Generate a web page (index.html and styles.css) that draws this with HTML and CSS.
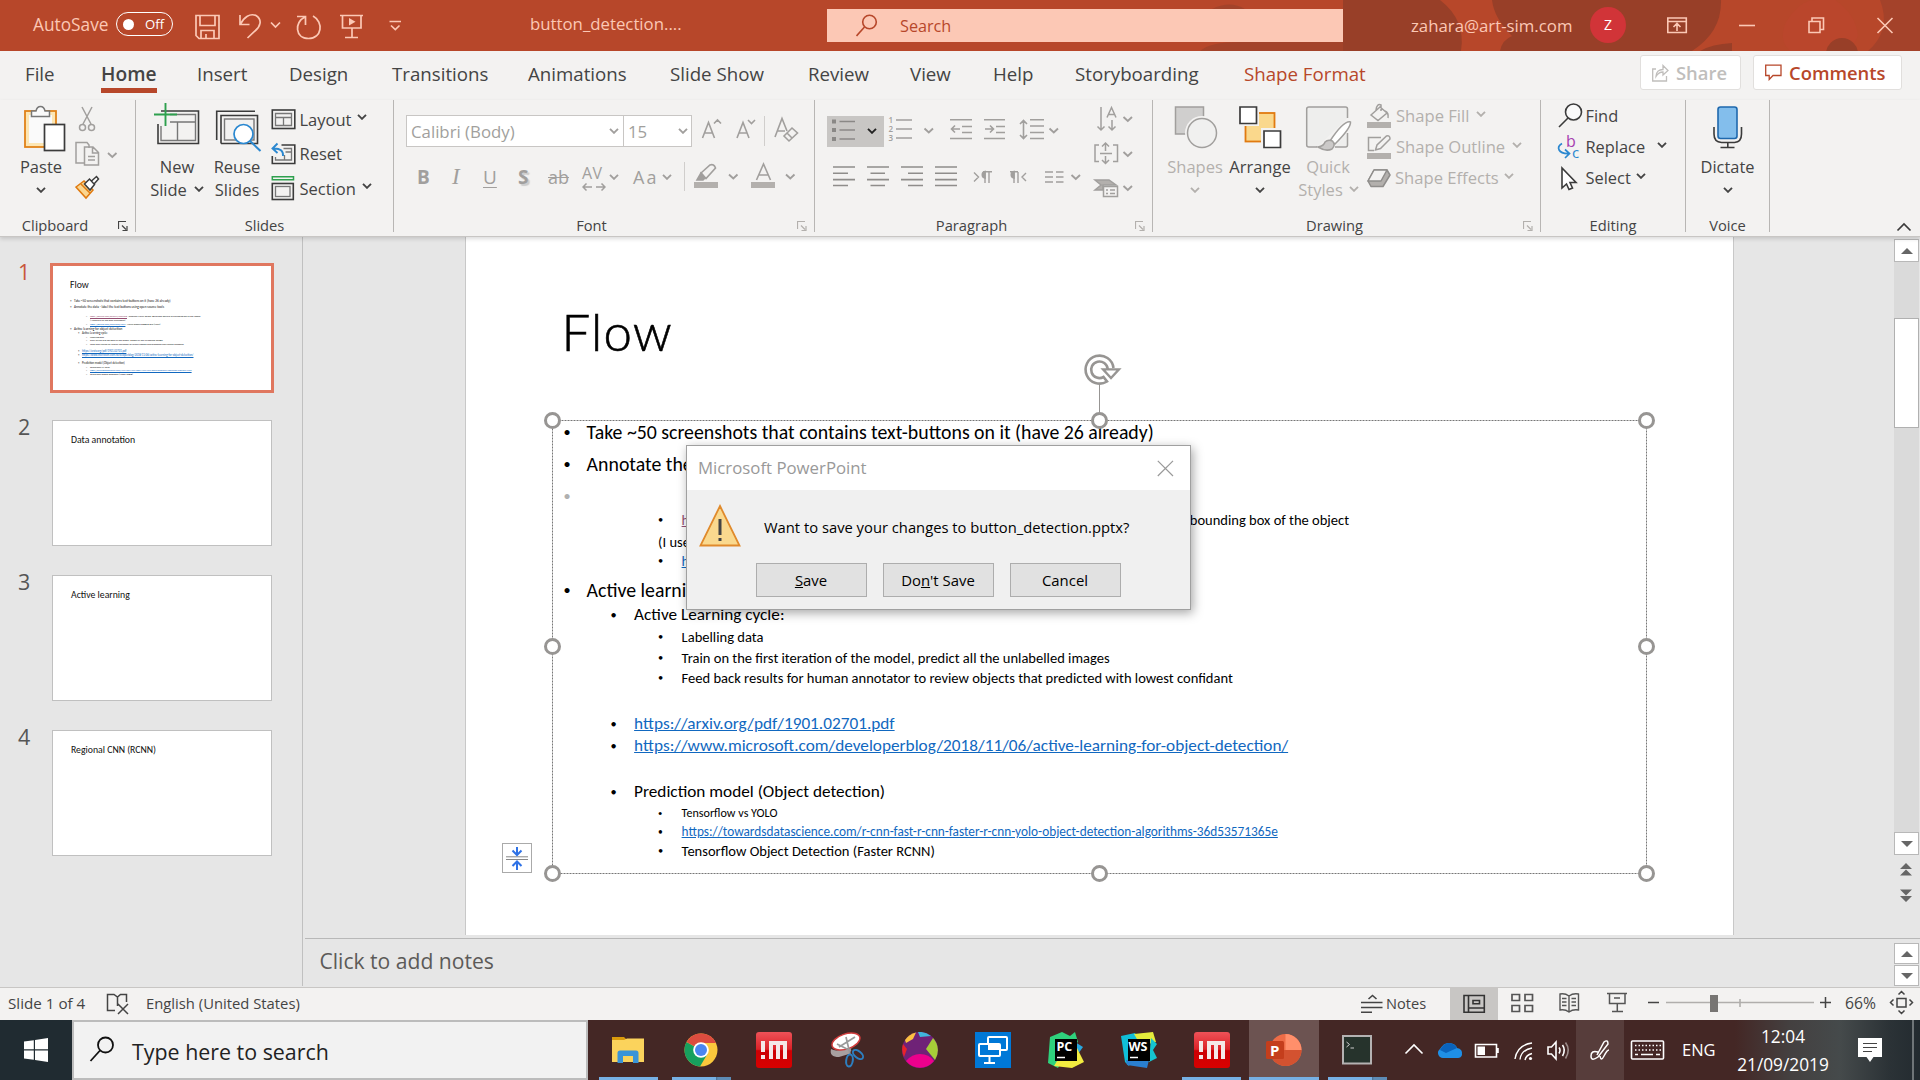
FILE: index.html
```html
<!DOCTYPE html>
<html lang="en">
<head>
<meta charset="utf-8">
<title>button_detection.pptx - PowerPoint</title>
<link rel="stylesheet" href="styles.css">
</head>
<body>
<svg class="defs" width="0" height="0">
  <defs>
    <symbol id="cv" viewBox="0 0 10 6"><path d="M1 .8 5 4.8 9 .8" fill="none" stroke="currentColor" stroke-width="1.9"/></symbol>
    <symbol id="launch" viewBox="0 0 10 11"><path d="M.5 8V.5H8M4 4.500 8 8.500M9 5V9.500H4.500" fill="none" stroke="currentColor" stroke-width="1.200"/></symbol>
    <linearGradient id="red" x1="0" y1="0" x2="0" y2="1"><stop offset="0" stop-color="#ee5258"/><stop offset=".48" stop-color="#dc2228"/><stop offset=".52" stop-color="#cc0004"/><stop offset="1" stop-color="#d80000"/></linearGradient>
    <symbol id="mi" viewBox="0 0 36 36"><rect width="36" height="36" rx="3" fill="url(#red)"/><path d="M5 9H9V20H5zM5 23H9V27H5zM13 9H31V27H27V13H24V27H20V13H17V27H13z" fill="#f4e8e8"/></symbol>
  </defs>
</svg>
<div class="app">
  <header class="titlebar">
    <svg class="swirl" width="920" height="51" viewBox="1000 0 920 51">
      <path d="M1200 51Q1210 42 1240 42H1345V51z" fill="#a3432a"/>
      <path d="M1212 9Q1230 0 1245 9z" fill="#a3432a"/>
      <path d="M1343 0H1440Q1466 20 1461 51H1343z" fill="#983f28"/>
      <path d="M1492 0H1721Q1722 32 1692 51H1500Q1502 40 1512 36Q1494 18 1492 0z" fill="#983f28"/>
      <path d="M1700 51Q1712 44 1732 43V51z" fill="#983f28"/>
      <path d="M1786 22Q1800 0 1815 0H1835Q1856 14 1858 36L1850 51H1790Q1778 40 1786 22z" fill="#ba462c"/>
      <circle cx="1842" cy="54" r="16" fill="#983f28"/>
      <path d="M1880 0H1920V51H1868Q1892 30 1880 0z" fill="#a4422a"/>
    </svg>
    <span class="autosave">AutoSave</span>
    <span class="toggle"><i></i>Off</span>
    <svg class="qat" width="230" height="51" viewBox="180 0 230 51" fill="none" stroke="#fcc8b5" stroke-width="1.700">
      <path d="M196 15.500H219V38.500H199L196 35.500zM200 16V25.500H215V16M201 38V30.500H214V38M206 38V34"/>
      <path d="M240 15V24.500H249.500M240.500 24C244 17 250 13 256 15.500C263 20 260 27 255 31L247.500 38"/>
      <path d="M271 22.500 275.500 27 280 22.500"/>
      <path d="M297 16.500H305.500V25M305 17C294 22 295 38.500 308.500 38.500C322 38.500 324 22 313 16"/>
      <path d="M340 15.500H363M342.500 16V28H361V16M352 28V37.500M345 37.500H358"/><path d="M349 18 355.500 21.700 349 25.500z" fill="#fcc8b5" stroke="none"/>
      <path d="M389.500 21.500H401M391 25.500 395.300 29.500 399.500 25.500"/>
    </svg>
    <span class="docname">button_detection....</span>
    <div class="search"><svg width="24" height="24" viewBox="0 0 24 24" fill="none" stroke="#b7472a" stroke-width="1.600"><circle cx="13.500" cy="8" r="6.800"/><path d="M8.500 13 .5 22"/></svg>Search</div>
    <span class="account">zahara@art-sim.com</span>
    <span class="avatar">Z</span>
    <svg class="winctl" width="250" height="51" viewBox="1650 0 250 51" fill="none" stroke="#fcc8b5" stroke-width="1.600">
      <path d="M1667.800 18H1686.300V32.500H1667.800zM1668 21.500H1686M1677 31V24M1673.500 27 1677 23.500 1680.500 27"/>
      <path d="M1739 25.500H1755"/><path d="M1809 21.500H1820V32.500H1809zM1812 21V18H1823.500V29.500H1820"/>
      <path d="M1877.500 18 1892.500 33M1892.500 18 1877.500 33"/>
    </svg>
  </header>

  <nav class="tabs">
    <a>File</a><a class="active"><b>Home</b></a><a>Insert</a><a>Design</a><a>Transitions</a><a>Animations</a><a>Slide Show</a><a>Review</a><a>View</a><a>Help</a><a>Storyboarding</a><a class="context">Shape Format</a>
    <span class="pill share"><svg width="17" height="18" viewBox="0 0 17 18" fill="none" stroke="#c0bebc" stroke-width="1.300"><path d="M4 5H.7V17H14.500V12M4 12.500C4 8 7 5.500 11 5.500V1.500L16 6.500 11 11V8C8 8 6 9 4 12.500z"/></svg>Share</span>
    <span class="pill comments"><svg width="17" height="17" viewBox="0 0 17 17" fill="none" stroke="#b7472a" stroke-width="1.300"><path d="M.7 1.200H16V11.500H8L4.200 15.500V11.500H.7z"/></svg>Comments</span>
  </nav>

  <section class="ribbon">
    <div class="group clipboard">
      <div class="body">
        <div class="big paste">
          <svg width="60" height="58" viewBox="14 100 60 58"><rect x="25" y="111" width="31" height="36" fill="#fce6b4" stroke="#e08218" stroke-width="1.800"/><rect x="29" y="115" width="23" height="28" fill="#fafafa"/><path d="M31.500 116.500V111H36Q37 106.500 40.500 106.500T45 111H49.500V116.500z" fill="#fafafa" stroke="#777" stroke-width="1.500"/><rect x="44.500" y="124.500" width="20" height="26" fill="#fff" stroke="#3b3b3b" stroke-width="1.700"/></svg>
          <span>Paste</span><svg class="cv"><use href="#cv"/></svg>
        </div>
        <svg class="tools" width="56" height="106" viewBox="72 100 56 106" fill="none" stroke="#a19f9d" stroke-width="1.500"><path d="M82 107 91 124M92 107 83 124"/><circle cx="82.500" cy="127.500" r="3"/><circle cx="91.500" cy="127.500" r="3"/>
          <path d="M84 163H76V142.500H87L89 145V148M84.500 147H93L98.500 152.500V165H84.500zM92.500 147V153H98.500M88 156.500H95M88 160H95"/><path d="M108 153 112.300 157 116.500 153" stroke-width="1.800"/>
          <path d="M76 187 84 181 93 190 86 198z" fill="#fbd690" stroke="#e07a10"/><path d="M81 184 90 193" stroke="#e07a10"/><path d="M84.500 184 89.500 179 94.500 184.500 90 190zM91.500 181 96.500 176.500 98.500 179 94 184" fill="#fff" stroke="#3b3b3b"/></svg>
      </div>
      <div class="label">Clipboard<svg class="launch"><use href="#launch"/></svg></div>
    </div>

    <div class="group slides">
      <div class="body">
        <div class="big new">
          <svg width="56" height="58" viewBox="150 100 56 58" fill="none"><path d="M161 111H198.500V143.500H158V124" stroke="#3b3b3b" stroke-width="1.600"/><path d="M170 114.500H195.500V140.500H161V126M170 122H195M177.500 122V140" stroke="#777" stroke-width="1.400"/><path d="M154 114.500H177M165.500 103V126" stroke="#2ea04e" stroke-width="1.900"/></svg>
          <span>New</span><span class="two">Slide <svg class="cv"><use href="#cv"/></svg></span>
        </div>
        <div class="big reuse">
          <svg width="56" height="58" viewBox="210 100 56 58" fill="none"><path d="M216.700 140V111.200H255M221 143.500V115.500H257.500V143.500H221" stroke="#3b3b3b" stroke-width="1.600"/><rect x="224.500" y="119" width="29.500" height="21" stroke="#777" stroke-width="1.400"/><circle cx="243.500" cy="134" r="9.500" fill="#fff" stroke="#2b88d0" stroke-width="1.700"/><path d="M250 141 260.500 151" stroke="#2b88d0" stroke-width="2"/></svg>
          <span>Reuse</span><span class="two">Slides</span>
        </div>
        <div class="rows">
          <div class="row"><svg width="25" height="26" viewBox="270.500 105 25 26" fill="none"><rect x="271.800" y="109" width="22.500" height="18.500" stroke="#3b3b3b" stroke-width="1.600"/><path d="M275 112.500H291V124.500H275zM275 116.500H291M283 116.500V124.500" stroke="#777" stroke-width="1.300"/></svg>Layout<svg class="cv"><use href="#cv"/></svg></div>
          <div class="row"><svg width="25" height="26" viewBox="270.500 140 25 26" fill="none"><path d="M281 144H294.300V162.500H271.800V155" stroke="#3b3b3b" stroke-width="1.600"/><path d="M283 147.500H291V159H275V156M285 151H291M284 154V159" stroke="#777" stroke-width="1.300"/><path d="M277 142.500 272 147.500 277 152M272.500 147.500C280 147 283 150 282.500 155" stroke="#2b88d0" stroke-width="1.900"/></svg>Reset</div>
          <div class="row"><svg width="25" height="26" viewBox="270.500 175 25 26" fill="none"><path d="M271.800 176.800H293V179.800H271.800z" stroke="#2ea04e" stroke-width="1.500"/><rect x="271.800" y="183.500" width="21" height="16" stroke="#3b3b3b" stroke-width="1.600"/><rect x="275" y="186.500" width="14.500" height="10" stroke="#777" stroke-width="1.300"/></svg>Section<svg class="cv"><use href="#cv"/></svg></div>
        </div>
      </div>
      <div class="label">Slides</div>
    </div>

    <div class="group font">
      <div class="body col">
        <div class="line">
          <div class="combo face">Calibri (Body)<svg class="cv"><use href="#cv"/></svg></div><div class="combo size">15<svg class="cv"><use href="#cv"/></svg></div>
          <svg width="110" height="34" viewBox="692 114 110 34" fill="none" stroke="#a19f9d" stroke-width="1.600"><path d="M702.500 138 708.500 122.500 714.500 138M704.500 133H712.500M714 123.500 717.500 120 721 123.500M737 138 743 122.500 749 138M739 133H747M748 120 751.500 123.500 755 120"/><path d="M764.500 116V146" stroke="#d0cecc" stroke-width="1"/><path d="M775 137 782 118.500 787 131M777 131H785M784 136 792 128 797.500 133 789 141zM787 133 792 138"/></svg>
        </div>
        <div class="line styles">
          <b>B</b><i>I</i><u>U</u><b class="shadow">S</b><s>ab</s>
          <span class="av">AV<svg width="24" height="8" viewBox="0 0 24 8" fill="none" stroke="currentColor" stroke-width="1.500"><path d="M4.500.5 1 4 4.500 7.500M1 4H10M19.500.5 23 4 19.500 7.500M23 4H14"/></svg></span><svg class="cv"><use href="#cv"/></svg>
          <span class="aa">Aa</span><svg class="cv"><use href="#cv"/></svg>
          <svg width="125" height="34" viewBox="681 161 125 34" fill="none" stroke="#a19f9d" stroke-width="1.600"><path d="M684.500 163V192" stroke="#d0cecc" stroke-width="1"/><path d="M694 183H718V189H694zM751 183H775V189H751z" fill="#b3b0ad" stroke="none"/><path d="M697 181 701 174 705 179 703 181z" fill="#a19f9d"/><path d="M701 174 710 166Q714 164.500 715.500 169L706 179.500z"/><path d="M729 175.500 733.300 179.500 737.500 175.500M786 175.500 790.300 179.500 794.500 175.500" stroke-width="1.900"/><path d="M756.500 181 763.500 165 770.500 181M759 176H768"/></svg>
        </div>
      </div>
      <div class="label">Font<svg class="launch off"><use href="#launch"/></svg></div>
    </div>

    <div class="group para">
      <div class="body">
        <div class="col">
          <div class="line">
            <span class="pressed"><svg width="26" height="24" viewBox="830 118 26 24"><path d="M832 118.500H836V122.500H832zM832 127H836V131H832zM832 136H836V140H832z" fill="#8a8886"/><path d="M839.500 120.500H855M839.500 129H855M839.500 138H855" stroke="#8a8886" stroke-width="1.600"/></svg><svg class="cv"><use href="#cv"/></svg></span>
            <svg width="181" height="34" viewBox="885 114 181 34" fill="none" stroke="#a19f9d" stroke-width="1.600"><path d="M896 120H912M896 129H912M896 138H912"/><path d="M924.500 128.500 928.800 132.500 933 128.500M1049.500 128.500 1053.800 132.500 1058 128.500" stroke-width="1.900"/><path d="M950 119.700H972M962 126.500H972M962 132.500H972M950 138.500H972M960 129H951.500M955 125.500 951.500 129 955 132.500M984 119.700H1005M996 126.500H1005M996 132.500H1005M984 138.500H1005M985 129H993.500M990 125.500 993.500 129 990 132.500M1030 119.700H1044M1030 126H1044M1030 132.500H1044M1030 138.500H1044M1023.500 120V139M1020 124 1023.500 120.500 1027 124M1020 135 1023.500 138.500 1027 135"/><g class="digits"><text x="888.500" y="123">1</text><text x="888.500" y="132">2</text><text x="888.500" y="141">3</text></g></svg>
          </div>
          <svg width="255" height="34" viewBox="827 159 255 34" fill="none" stroke="#8f8d8b" stroke-width="1.600"><path d="M833 166H855M833 172.300H848M833 178.600H855M833 184.500H848M867 166H889M870.500 172.300H885M867 178.600H889M870.500 184.500H885M901 166H923M908 172.300H923M901 178.600H923M908 184.500H923M935 166H957M935 172.300H957M935 178.600H957M935 184.500H957"/><path d="M974 171.500 978.500 176 974 180.500M985 182V171M989 182V171M983 170.800H992M1014 182V171M1018 182V171M1010 170.800H1018M1026 172 1022 176 1026 180M1045 171H1053M1045 176H1053M1045 181H1053M1056 171H1063.500M1056 176H1063.500M1056 181H1063.500" stroke="#a19f9d" stroke-width="1.400"/><path d="M985 170.500A3.300 3.300 0 0 0 985 177zM1014 170.500A3.300 3.300 0 0 0 1014 177z" fill="#a19f9d" stroke="#a19f9d"/><path d="M1071.500 174 1075.800 178 1080 174" stroke="#a19f9d" stroke-width="1.900"/></svg>
        </div>
        <svg class="tools" width="50" height="106" viewBox="1090 100 50 106" fill="none" stroke="#a19f9d" stroke-width="1.500"><path d="M1101 107V130M1097.500 126.500 1101 130 1104.500 126.500M1112 120V130M1108.500 126.500 1112 130 1115.500 126.500M1107 117.500 1111.500 107.500 1116 117.500M1108.500 114.500H1114.500"/><path d="M1099 145H1095V161.500H1099M1113 145H1117.500V161.500H1113M1100 153.500H1112M1105.500 143V151M1102 146.500 1105.500 143 1109 146.500M1105.500 156V163.500M1102 160 1105.500 163.500 1109 160"/><path d="M1095 180H1109L1116 185H1103V190H1095L1101 185z" fill="#b3b0ad"/><rect x="1103.500" y="186.500" width="14" height="10" fill="#f3f2f1"/><path d="M1106 190H1108M1110 190H1115M1106 193.500H1108M1110 193.500H1115"/><path d="M1123.500 117 1127.800 121 1132 117M1123.500 152 1127.800 156 1132 152M1123.500 186 1127.800 190 1132 186" stroke-width="1.900"/></svg>
      </div>
      <div class="label">Paragraph<svg class="launch off"><use href="#launch"/></svg></div>
    </div>

    <div class="group drawing">
      <div class="body">
        <div class="big off shapes"><svg width="50" height="58" viewBox="1170 100 50 58"><rect x="1175.500" y="107" width="28" height="27" fill="#d0cfce" stroke="#a19f9d" stroke-width="1.500"/><circle cx="1202" cy="133" r="17" fill="#f3f2f1"/><circle cx="1202" cy="133" r="14.500" fill="#f0f0ef" stroke="#a19f9d" stroke-width="1.500"/></svg><span>Shapes</span><svg class="cv"><use href="#cv"/></svg></div>
        <div class="big arrange"><svg width="50" height="58" viewBox="1236 100 50 58"><rect x="1246.500" y="113" width="29" height="28.500" fill="#fad88c" stroke="#e07a10" stroke-width="1.800"/><rect x="1238" y="104" width="22" height="22" fill="#f3f2f1"/><rect x="1262" y="128" width="22" height="22" fill="#f3f2f1"/><path d="M1241 107H1257.500V123.500H1241zM1265 131H1281.500V147.500H1265z" fill="#fff" stroke="#3b3b3b" stroke-width="1.700"/></svg><span>Arrange</span><svg class="cv"><use href="#cv"/></svg></div>
        <div class="big off quick"><svg width="50" height="58" viewBox="1305 100 50 58" fill="#eeeeed" stroke="#a19f9d" stroke-width="1.500"><path d="M1348.500 118V109Q1348.500 107 1346.500 107H1310Q1307.700 107 1307.700 109V145Q1307.700 147 1310 147H1318M1348.500 133V145Q1348.500 147 1346.500 147H1336"/><path d="M1331 141Q1345 120 1351.500 122Q1352 128 1336 144z" fill="#fff"/><path d="M1319 147Q1325 146 1326 142Q1329 139 1333.500 141Q1337 145 1333 149Q1327 152 1319 147z" fill="#cbc9c8"/></svg><span>Quick</span><span class="two">Styles <svg class="cv"><use href="#cv"/></svg></span></div>
        <div class="rows tight off">
          <div class="row"><svg width="26" height="30" viewBox="1366 100 26 30" fill="none" stroke="#a19f9d" stroke-width="1.500"><path d="M1367 121H1391V127H1367z" fill="#b3b0ad" stroke="none"/><path d="M1371 114 1380 106 1387 112 1378 119.500zM1376 109Q1377 102 1381 104V110M1385 110Q1389 112 1388 117"/></svg>Shape Fill<svg class="cv"><use href="#cv"/></svg></div>
          <div class="row"><svg width="26" height="30" viewBox="1366 131 26 30" fill="none" stroke="#a19f9d" stroke-width="1.500"><path d="M1367 152H1391V158H1367z" fill="#b3b0ad" stroke="none"/><path d="M1381 136.500H1368.500V149.500H1374M1375.500 149 1377 144 1386.500 135Q1390 134 1390 138L1380.500 147.500z"/></svg>Shape Outline<svg class="cv"><use href="#cv"/></svg></div>
          <div class="row fx"><svg width="26" height="30" viewBox="1366 162 26 30" stroke="#8f8d8b" stroke-width="1.500" stroke-linejoin="round"><path d="M1368 180 1374 169H1387L1390 174 1383 185.500H1371z" fill="#b3b0ad"/><path d="M1368 180 1374 169H1387L1381 180z" fill="#f3f2f1"/></svg>Shape Effects<svg class="cv"><use href="#cv"/></svg></div>
        </div>
      </div>
      <div class="label">Drawing<svg class="launch off"><use href="#launch"/></svg></div>
    </div>

    <div class="group editing">
      <div class="body">
        <div class="rows tight">
          <div class="row"><svg width="26" height="30" viewBox="1557 100 26 30" fill="none" stroke="#3b3b3b" stroke-width="1.600"><circle cx="1573.500" cy="111" r="8" fill="#fafafa"/><path d="M1568 117 1559 126"/></svg>Find</div>
          <div class="row rep"><svg width="26" height="30" viewBox="1557 131 26 30" fill="none"><text class="rb" x="1566" y="145.500">b</text><text class="rc" x="1572" y="157">c</text><path d="M1562 142.500C1556 146 1558 153 1569 152.500M1565 148.500 1569.500 152.500 1565 157" stroke="#2b88d0" stroke-width="1.700"/></svg>Replace<svg class="cv"><use href="#cv"/></svg></div>
          <div class="row"><svg width="26" height="30" viewBox="1557 162 26 30"><path d="M1562 167V187L1566.500 183 1569 188.500 1572.500 187 1570 181.500H1576z" fill="#fff" stroke="#3b3b3b" stroke-width="1.600"/></svg>Select<svg class="cv"><use href="#cv"/></svg></div>
        </div>
      </div>
      <div class="label">Editing</div>
    </div>

    <div class="group voice">
      <div class="body">
        <div class="big"><svg width="50" height="58" viewBox="1702.500 100 50 58" fill="none" stroke="#3b3b3b" stroke-width="1.600"><rect x="1717.500" y="107" width="19" height="31.500" rx="2.500" fill="#83beec" stroke="#1e68ad"/><path d="M1713.500 127V134Q1713.500 142 1721 142.500H1734Q1741 142 1741 134V127M1727.300 142.500V147.500M1720 147.500H1734"/></svg><span>Dictate</span><svg class="cv"><use href="#cv"/></svg></div>
      </div>
      <div class="label">Voice</div>
    </div>
    <svg class="collapse" width="16" height="10" viewBox="0 0 16 10"><path d="M1.500 8.500 8 2 14.500 8.500" fill="none" stroke="#3b3b3b" stroke-width="1.700"/></svg>
  </section>

  <main class="workspace">
    <aside class="thumbs">
      <div class="thumb current"><em>1</em><div class="mini"><h2>Flow</h2>
        <ul>
          <li>Take ~50 screenshots that contains text-buttons on it (have 26 already)</li>
          <li>Annotate the data - label the text buttons using open source tools</li>
          <li class="l3"><a class="seen">https://github.com/tzutalin/labelImg</a> - Requires Visual Studio, generates text file of bounding box of the object</li>
          <li class="l3 none">(I used this for the data annotation)</li>
          <li class="l3"><a>https://github.com/microsoft/VoTT</a> - Visual Object Tagging Tool (VoTT)</li>
          <li>Active learning for object detection</li>
          <li class="l2">Active Learning cycle:</li>
          <li class="l3">Labelling data</li>
          <li class="l3">Train on the first iteration of the model, predict all the unlabelled images</li>
          <li class="l3">Feed back results for human annotator to review objects that predicted with lowest confidant</li>
          <li class="l2"><a>https://arxiv.org/pdf/1901.02701.pdf</a></li>
          <li class="l2"><a>https://www.microsoft.com/developerblog/2018/11/06/active-learning-for-object-detection/</a></li>
          <li class="l2">Prediction model (Object detection)</li>
          <li class="l3">Tensorflow vs YOLO</li>
          <li class="l3 small"><a>https://towardsdatascience.com/r-cnn-fast-r-cnn-faster-r-cnn-yolo-object-detection-algorithms-36d53571365e</a></li>
          <li class="l3">Tensorflow Object Detection (Faster RCNN)</li>
        </ul></div></div>
      <div class="thumb"><em>2</em><div class="mini"><h2>Data annotation</h2></div></div>
      <div class="thumb"><em>3</em><div class="mini"><h2>Active learning</h2></div></div>
      <div class="thumb"><em>4</em><div class="mini"><h2>Regional CNN (RCNN)</h2></div></div>
    </aside>
    <div class="editor">
      <div class="canvas">
        <div class="slide">
          <h1>Flow</h1>
          <ul class="content">
            <li>Take ~50 screenshots that contains text-buttons on it (have 26 already)</li>
            <li>Annotate the data</li>
            <li class="empty"></li>
            <li class="l3 split"><a class="seen">https</a><span>bounding box of the object</span></li>
            <li class="l3 none">(I used</li>
            <li class="l3"><a>https</a></li>
            <li>Active learning</li>
            <li class="l2">Active Learning cycle:</li>
            <li class="l3">Labelling data</li>
            <li class="l3">Train on the first iteration of the model, predict all the unlabelled images</li>
            <li class="l3">Feed back results for human annotator to review objects that predicted with lowest confidant</li>
            <li class="l2"><a>https://arxiv.org/pdf/1901.02701.pdf</a></li>
            <li class="l2"><a>https://www.microsoft.com/developerblog/2018/11/06/active-learning-for-object-detection/</a></li>
            <li class="l2">Prediction model (Object detection)</li>
            <li class="l3 tiny">Tensorflow vs YOLO</li>
            <li class="l3 small"><a>https://towardsdatascience.com/r-cnn-fast-r-cnn-faster-r-cnn-yolo-object-detection-algorithms-36d53571365e</a></li>
            <li class="l3">Tensorflow Object Detection (Faster RCNN)</li>
          </ul>
          <svg class="selection" width="1160" height="550" viewBox="500 340 1160 550" fill="none" stroke="#979593">
            <rect x="552.500" y="420.500" width="1094" height="453" stroke="#777" stroke-dasharray="2 1"/>
            <path d="M1099.500 384V412"/>
            <g fill="#fff" stroke-width="3"><circle cx="552.500" cy="420.500" r="7"/><circle cx="1099.500" cy="420.500" r="7"/><circle cx="1646.500" cy="420.500" r="7"/><circle cx="552.500" cy="646.500" r="7"/><circle cx="1646.500" cy="646.500" r="7"/><circle cx="552.500" cy="873.500" r="7"/><circle cx="1099.500" cy="873.500" r="7"/><circle cx="1646.500" cy="873.500" r="7"/></g>
            <path d="M1113.500 368A14 14 0 1 0 1107 381.500L1103.500 377A8.300 8.300 0 1 1 1107.700 369" fill="#fff" stroke-width="2.600"/><path d="M1103 369.300H1119L1111 378z" fill="#fff" stroke-width="2.300"/>
            <rect x="502.500" y="843.500" width="29" height="29" fill="#fff" stroke="#aaa"/><path d="M506 856.800H528M506 859.500H528" stroke="#888"/><path d="M517 847V854M512.500 850.500 517 855 521.500 850.500M517 870V862.500M512.500 866 517 861.500 521.500 866" stroke="#2f72e6" stroke-width="2"/>
          </svg>
        </div>
        <div class="scroll">
          <span class="sb up"></span><span class="gap1"></span><span class="grip"></span><span class="track"></span><span class="sb down"></span>
          <svg width="24" height="50" viewBox="0 0 24 50" fill="#666"><path d="M6 14 12 8 18 14zM6 20.500 12 14.500 18 20.500zM6 34.500 12 40.500 18 34.500zM6 41 12 47 18 41z"/></svg>
        </div>
      </div>
      <div class="notes"><span>Click to add notes</span><div class="nscroll"><span class="sb up"></span><span class="sb down"></span></div></div>
    </div>
  </main>

  <footer class="status">
    <span class="st1">Slide 1 of 4</span>
    <svg class="proof" width="24" height="22" viewBox="0 0 24 22" fill="none" stroke="#444" stroke-width="1.500"><path d="M9 17.500H1.500V1.500H8L11.500 4 14.500 1.500H20.500V9M11.500 4V13M12 11 22 21M22 11 12 21"/></svg>
    <span class="lang">English (United States)</span>
    <svg width="24" height="22" viewBox="1360 992 24 22" fill="none" stroke="#444" stroke-width="1.600"><path d="M1361 1001.500H1382.500M1361 1006.500H1382.500M1361 1011.300H1372M1368.500 998 1372.500 994.500 1376.500 998"/></svg>
    <span class="nt">Notes</span>
    <span class="normal"><svg width="24" height="22" viewBox="1462 992 24 22" fill="none" stroke="#333" stroke-width="1.600"><path d="M1464 994.500H1484.300V1011.300H1464zM1468.500 995V1011M1468.500 1007H1484M1473 999.500H1479.500V1002.800H1473z"/></svg></span>
    <svg class="views" width="420" height="32" viewBox="1498 988 420 32" fill="none" stroke="#555" stroke-width="1.700"><path d="M1512 994.500H1519.500V1000.500H1512zM1525 994.500H1532.500V1000.500H1525zM1512 1005.500H1519.500V1011.500H1512zM1525 1005.500H1532.500V1011.500H1525z"/><path d="M1569 996V1012M1569 996Q1565 993 1560 994V1010Q1565 1009 1569 1012Q1573 1009 1578.500 1010V994Q1573 993 1569 996M1562 998.500H1566.500M1562 1002H1566.500M1562 1005.500H1566.500M1571.500 998.500H1576M1571.500 1002H1576M1571.500 1005.500H1576" stroke-width="1.400"/><path d="M1607 993.500H1627M1609.500 994V1003.500H1625V994M1617.300 1004V1011.500M1612 1011.500H1623M1614 998H1620" stroke-width="1.500"/><path d="M1648 1002.500H1659M1820 1002.500H1831M1825.500 997V1008" stroke="#444" stroke-width="1.500"/><path d="M1666 1002.500H1814M1740 999V1007" stroke="#b0aeac" stroke-width="1.600"/><rect x="1710" y="995" width="8" height="17" fill="#777573" stroke="none"/><text class="pct" x="1845" y="1009">66%</text><path d="M1897 998.500H1906V1007H1897zM1898.500 994.500 1901.500 991.500 1904.500 994.500M1898.500 1010.500 1901.500 1013.500 1904.500 1010.500M1893.500 999.500 1890.500 1002.500 1893.500 1005.500M1909.500 999.500 1912.500 1002.500 1909.500 1005.500" stroke="#444" stroke-width="1.500"/></svg>
  </footer>

  <footer class="taskbar">
    <div class="start"><svg width="24" height="24" viewBox="0 0 24 24" fill="#fff"><path d="M0 3.500 9.800 2.200V11.300H0zM11 2 24 0V11.300H11zM0 12.500H9.800V21.800L0 20.500zM11 12.500H24V24L11 22z"/></svg></div>
    <div class="tsearch"><svg width="26" height="26" viewBox="0 0 26 26" fill="none" stroke="#111" stroke-width="1.800"><circle cx="16.500" cy="9" r="7.500"/><path d="M11 14.500 1.500 25"/></svg>Type here to search</div>
    <div class="apps">
      <span class="cell run"><svg width="32" height="28" viewBox="0 0 32 28"><path d="M0 1H12L14 3V6H0z" fill="#d99a0c"/><path d="M0 4H12L15 2.500H32V26H0z" fill="#fbd35c"/><path d="M5.500 27V17Q5.500 14.500 8 14.500H24Q26.500 14.500 26.500 17V27H21V20H11V27z" fill="#3a94d8"/></svg></span>
      <span class="cell run multi"><svg width="34" height="34" viewBox="0 0 34 34"><circle cx="17" cy="17" r="16.500" fill="#fbc83c"/><path d="M17 17 2.500 9A16.500 16.500 0 0 0 16 33.500L24 20z" fill="#17a05e"/><path d="M17 17 2.600 9A16.500 16.500 0 0 1 32 10H17z" fill="#dc4c3f"/><circle cx="17" cy="17" r="7.800" fill="#fff"/><circle cx="17" cy="17" r="6" fill="#4a86f0"/></svg></span>
      <span class="cell"><svg width="36" height="36"><use href="#mi"/></svg></span>
      <span class="cell"><svg width="36" height="36" viewBox="0 0 36 36"><path d="M2 17Q0 25 10 25L20 22 25 10Q10 22 2 17z" fill="#a8a0a0"/><ellipse cx="17" cy="9.500" rx="14.500" ry="7.500" transform="rotate(-18 17 9.500)" fill="#fff" stroke="#d03c3c" stroke-width="1.500"/><path d="M8 12 22 19M17 5 21 22M10 15 26 5" stroke="#999" stroke-width="1.700"/><g fill="none" stroke="#2d7fc0" stroke-width="2"><ellipse cx="20.500" cy="28.500" rx="3.300" ry="6" transform="rotate(8 20.500 28.500)"/><ellipse cx="29" cy="22.500" rx="3.300" ry="6" transform="rotate(-50 29 22.500)"/></g></svg></span>
      <span class="cell"><svg width="36" height="36" viewBox="0 0 36 36"><circle cx="18" cy="18" r="18" fill="#6f2277"/><path d="M3 8A18 18 0 0 1 14 .5L11 7 4 11z" fill="#fbc040"/><path d="M16 0A18 18 0 0 1 29 4L18 5z" fill="#3fb6dc"/><path d="M31 6A18 18 0 0 1 33 28L24 17z" fill="#a6ce38"/><path d="M1 12 5 17 2 25A18 18 0 0 1 1 12z" fill="#e8222a"/><path d="M4 29Q10 22 18 22Q27 22 32 29A18 18 0 0 1 4 29z" fill="#ec008c"/></svg></span>
      <span class="cell"><svg width="36" height="36" viewBox="0 0 36 36" fill="#0078d7"><rect width="36" height="36"/><g stroke="#fff" stroke-width="2"><rect x="13" y="5" width="19" height="13" rx="1"/><rect x="4" y="12" width="21" height="12" rx="1"/><path d="M14.500 24V31M9 31H20"/></g><path d="M13 13H25V18H13z" fill="#fff"/></svg></span>
      <span class="cell"><svg width="36" height="36" viewBox="0 0 36 36"><path d="M2 5 14 0 22 4 27 0 30 10 20 18 10 36 0 31z" fill="#2fd27d"/><path d="M27 10 35 15 30 22z" fill="#28a8e0"/><path d="M28 14 36 30 24 36 6 34 12 24z" fill="#f3ec40"/><rect x="7" y="7" width="22" height="22" fill="#000"/><path d="M9 25.500H17" stroke="#fff" stroke-width="1.500"/><text class="jb" x="8.500" y="19">PC</text></svg></span>
      <span class="cell"><svg width="36" height="36" viewBox="0 0 36 36"><path d="M0 4 14 1 18 8 8 34 4 30z" fill="#10bfd8"/><path d="M13 2 32 0 35 10 20 14z" fill="#e4ec3c"/><path d="M30 6 36 12 32 18 36 26 28 30z" fill="#15c5d0"/><path d="M5 28H28L26 36 6 33z" fill="#2a7fd0"/><rect x="7" y="7" width="22" height="22" fill="#000"/><path d="M9 25.500H17" stroke="#fff" stroke-width="1.500"/><text class="jb" x="7.500" y="19">WS</text></svg></span>
      <span class="cell run"><svg width="36" height="36"><use href="#mi"/></svg></span>
      <span class="cell run on"><svg width="36" height="34" viewBox="0 0 36 34"><circle cx="19.500" cy="17" r="16" fill="#ed6c47"/><path d="M19.500 17V1A16 16 0 0 1 35.500 17z" fill="#ff8f6b"/><path d="M3.500 17H35.500A16 16 0 0 1 3.500 17z" fill="#d35230"/><rect y="8" width="18" height="18" rx="1.500" fill="#c43e1c"/><text class="pp" x="4" y="22.500">P</text></svg></span>
      <span class="cell run multi"><svg width="30" height="30" viewBox="0 0 30 30"><rect x="1" y="1" width="28" height="27.500" fill="#26332c" stroke="#b4b2b2" stroke-width="2"/><path d="M4.500 7 7.500 9.500 4.500 12M8.500 13H12" stroke="#ccc" fill="none"/></svg></span>
    </div>
    <svg class="tray" width="275" height="60" viewBox="1394 1020 275 60" fill="none" stroke="#fff" stroke-width="1.600">
      <rect x="1576" y="1020" width="48" height="60" fill="#573d3b" stroke="none"/>
      <path d="M1405.500 1053.500 1414 1045 1422.500 1053.500"/>
      <path d="M1443 1058A5 5 0 0 1 1440 1049Q1444 1042 1450 1043Q1456 1044 1457 1048Q1463 1049 1462 1055Q1461 1058 1458 1058z" fill="#1f8fe6" stroke="none"/><path d="M1440 1050Q1444 1042 1450 1043Q1455 1044 1457 1048L1446 1053z" fill="#0a63bc" stroke="none"/>
      <path d="M1475.500 1044.500H1496.500V1057H1475.500zM1498 1048V1053"/><path d="M1477.500 1046.500H1485V1055H1477.500z" fill="#fff" stroke="none"/>
      <path d="M1515 1059Q1517 1045 1532 1043M1520 1059.500Q1521 1050 1532 1048M1525 1060Q1526 1055 1532 1053.500" stroke-width="1.400"/><circle cx="1530.500" cy="1058.500" r="1.600" fill="#fff" stroke="none"/>
      <path d="M1548 1047H1551.500L1556 1042V1059L1551.500 1054H1548zM1559 1047.500Q1561 1050 1559 1053.500M1562.500 1045Q1566 1050 1562.500 1056"/><path d="M1565.500 1042.500Q1571 1050 1565.500 1058.500" stroke="#9a8a88"/>
      <path d="M1598 1052Q1591 1050 1591 1056T1598 1057L1608 1044Q1608 1039 1604 1042L1597 1055M1600 1056Q1601 1062 1604 1056T1609 1050" stroke-width="1.500"/>
      <rect x="1631.500" y="1041" width="32" height="18" rx="1"/><path d="M1635 1045.500H1661M1635 1050H1661" stroke-dasharray="1.500 2"/><path d="M1635 1054.500H1638M1641 1054.500H1653M1656 1054.500H1660"/>
    </svg>
    <span class="eng">ENG</span>
    <div class="clock"><span>12:04</span><span>21/09/2019</span></div>
    <svg class="bell" width="24" height="26" viewBox="0 0 24 26"><path d="M0 0H24V19H15.500L12 24 8.500 19H0z" fill="#fff"/><path d="M5 5.500H19M5 9.500H19M5 13.500H14" stroke="#444" stroke-width="1.200"/></svg>
    <i class="peek"></i>
  </footer>

  <div class="dialog">
    <div class="dtitle">Microsoft PowerPoint<svg width="17" height="17" viewBox="0 0 17 17"><path d="M.8.800 16 16M16 .8.800 16" stroke="#999" stroke-width="1.200"/></svg></div>
    <div class="dmsg"><svg width="42" height="43" viewBox="0 0 42 43"><path d="M21 2 40.500 41.500H1.500z" fill="#fad98e" stroke="#e08a2c" stroke-width="1.800"/><path d="M21 15V31M21 34V37" stroke="#444" stroke-width="3"/></svg>Want to save your changes to button_detection.pptx?</div>
    <div class="dbtns"><span><u>S</u>ave</span><span>Do<u>n</u>'t Save</span><span>Cancel</span></div>
  </div>
</div>
</body>
</html>
```
FILE: styles.css
```css
* { box-sizing: border-box; }
body { margin: 0; background: #e6e6e6; font-family: "Open Sans", "Noto Sans", sans-serif; color: #444; }
svg { display: block; flex: none; }
.defs { position: absolute; }
.app { position: relative; display: flex; flex-direction: column; width: 1920px; height: 1080px; overflow: hidden; }
.cv { width: 10px; height: 6px; }
text { stroke: none; }

/* title bar */
.titlebar { position: relative; display: flex; align-items: center; height: 51px; background: #b7472a; color: #fcc8b5; font-size: 16.8px; line-height: 24px; padding-left: 33px; white-space: nowrap; }
.titlebar > * { position: relative; flex: none; }
.titlebar .swirl { position: absolute; right: 0; top: 0; }
.autosave { width: 83px; margin-top: -1px; font-size: 17.3px; }
.toggle { display: flex; align-items: center; gap: 11px; width: 57px; height: 24px; margin-top: -3px; padding-left: 6px; border: 1.5px solid #fff; border-radius: 12px; color: #fff; font-size: 13.2px; }
.toggle i { width: 11px; height: 11px; border-radius: 50%; background: #fff; }
.qat { margin-left: 7px; }
.docname { width: 297px; margin: -3px 0 0 120px; }
.search { display: flex; align-items: center; gap: 20px; width: 516px; height: 33px; padding-left: 29px; background: #fcc8b5; color: #b7472a; font-size: 16.2px; }
.account { width: 163px; margin-left: 68px; }
.avatar { width: 36px; height: 36px; margin: -1px 0 0 16px; border-radius: 50%; background: #d13438; color: #fff; font-size: 14px; line-height: 36px; text-align: center; }
.winctl { margin-left: 24px; }

/* tabs */
.tabs { display: grid; grid-template-columns: 76px 96px 92px 103px 136px 142px 138px 102px 83px 82px 169px 396px 113px 149px; height: 49px; padding-left: 25px; background: #f3f2f1; font-size: 18.7px; line-height: 26px; white-space: nowrap; }
.tabs a { padding-top: 10px; }
.tabs b { display: inline-block; height: 32px; border-bottom: 5px solid #b7472a; font-weight: 600; font-size: 19.2px; }
.tabs .context { color: #b7472a; }
.pill { display: flex; align-items: center; height: 35px; margin-top: 4px; padding-left: 11px; background: #fff; border: 1px solid #e1dfdd; border-radius: 3px; font-size: 18.4px; font-weight: 600; gap: 7px; }
.share { width: 101px; color: #c0bebc; }
.comments { color: #b7472a; }

/* ribbon */
.ribbon { display: flex; height: 137px; background: #f3f2f1; border-bottom: 1px solid #c8c6c4; font-size: 16.5px; color: #444; position: relative; z-index: 1; box-shadow: 0 2px 4px rgba(0,0,0,.14); }
.group { display: flex; flex-direction: column; height: 132px; border-right: 1px solid #b8b6b4; flex: none; }
.clipboard { width: 136px; } .slides { width: 258px; } .font { width: 421px; } .para { width: 338px; } .drawing { width: 388px; } .editing { width: 145px; } .voice { width: 84px; }
.body { display: flex; height: 112px; }
.col { display: flex; flex-direction: column; }
.label { position: relative; height: 20px; line-height: 27px; font-size: 14.7px; text-align: center; }
.clipboard .label { padding-right: 25px; } .font .label { padding-right: 25px; } .para .label { padding-right: 24px; } .drawing .label { padding-right: 24px; }
.launch { position: absolute; right: 7px; top: 9px; width: 10px; height: 11px; }
.launch.off { color: #b3b0ad; }
.big { display: flex; flex-direction: column; align-items: center; flex: none; line-height: 24px; }
.big > svg:first-child { margin-bottom: -3px; }
.big > .cv { margin-top: 8px; }
.big .two { display: flex; align-items: center; gap: 7px; margin-top: -1px; white-space: nowrap; }
.big .two .cv { margin-top: -2px; }
.off { color: #b3b0ad; }
.paste { width: 60px; margin-left: 11px; }
.paste > svg:first-child { margin-left: 6px; }
.clipboard .tools { margin-left: 1px; }
.new { width: 56px; margin-left: 13px; }
.new > svg:first-child { margin-left: 2px; }
.reuse { width: 56px; margin-left: 4px; }
.reuse > svg:first-child { margin-left: 2px; }
.rows { padding-top: 2px; }
.row { display: flex; align-items: center; gap: 3.5px; height: 34.5px; white-space: nowrap; }
.row .cv { margin-left: 2.5px; margin-top: -4px; }
.slides .rows { margin-left: 6px; }
.tight { padding-top: 0; }
.tight .row { height: 31px; font-size: 16.6px; }
.line { display: flex; align-items: center; height: 34px; }
.font .body { padding: 14px 0 0 12px; }
.combo { display: flex; align-items: center; justify-content: space-between; height: 32px; padding: 0 4px; background: #fff; border: 1px solid #c8c6c4; color: #a19f9d; font-size: 16.8px; }
.face { width: 218px; } .size { width: 69px; margin-left: -1px; padding-right: 3px; }
.styles { margin-top: 12px; color: #a19f9d; font-size: 20px; line-height: 30px; }
.styles > * { flex: none; }
.styles b, .styles i, .styles u { width: 33px; padding-left: 11px; font-size: 19px; font-weight: 700; }
.styles i { font-family: "Liberation Serif", serif; font-weight: 400; font-size: 23px; padding-left: 13px; }
.styles u { font-weight: 400; padding-left: 11px; text-underline-offset: 3px; }
.styles .shadow { width: 43px; padding-left: 13px; text-shadow: 2px 2px 1px #ccc; }
.styles s { width: 34px; font-size: 18px; }
.av { width: 27px; font-size: 16px; line-height: 19px; letter-spacing: .5px; }
.aa { width: 29px; margin-left: 14px; font-size: 18px; letter-spacing: 2px; }
.styles > svg:last-child { margin-left: 9px; }
.para .body { padding-left: 12px; }
.para .col { width: 263px; padding-top: 14px; gap: 12px; }
.pressed { display: flex; align-items: center; gap: 11px; width: 57px; height: 31px; padding-left: 3px; background: #c8c6c4; color: #222; margin-right: 1px; }
.digits { font: 600 8px "Open Sans", sans-serif; fill: #a19f9d; }
.shapes { width: 56px; margin-left: 14px; } .arrange { width: 64px; margin-left: 5px; } .quick { width: 60px; margin-left: 6px; }
.quick .two { padding-left: 1px; gap: 6px; }
.quick > svg:first-child { margin-left: 1px; }
.drawing .rows { margin-left: 8px; }
.drawing .row { gap: 4px; }
.drawing .fx { gap: 3px; }
.editing .rows { margin-left: 16px; }
.editing .row { gap: 2.5px; font-size: 16.4px; }
.editing .rep .cv { margin-left: 9px; }
.rep svg { overflow: visible; }
.rb { font: 16px "Open Sans", sans-serif; fill: #a640b0; } .rc { font: 15px "Open Sans", sans-serif; fill: #2b88d0; }
.voice .big { width: 83px; font-size: 16.4px; }
.collapse { margin: 122px 0 0 126px; }

/* workspace */
.workspace { display: flex; height: 750px; background: #e6e6e6; }
.thumbs { width: 303px; height: 749px; padding: 26px 0 0 18px; border-right: 1px solid #c0c0c0; }
.thumb { display: flex; height: 127px; margin-bottom: 28px; }
.thumb em { width: 34px; margin-top: -8px; font-style: normal; font-size: 21.5px; line-height: 30px; color: #555; }
.mini { width: 220px; height: 126px; padding: 13px 0 0 18px; background: #fff; border: 1px solid #c0c0c0; color: #111; font-family: "Carlito", "Lato", sans-serif; overflow: hidden; }
.mini h2 { margin: 0; font-size: 9.75px; line-height: 12px; font-weight: 400; }
.current { height: 130px; margin-bottom: 27px; }
.current em { color: #c8573b; margin-top: -6px; }
.current .mini { width: 224px; height: 130px; margin-left: -2px; padding: 13px 0 0 17px; border: 3px solid #e0775f; }
.mini ul { margin: 8px 0 0; padding: 0; list-style: none; font-size: 3.39px; line-height: 5px; white-space: nowrap; }
.mini li { height: 4px; padding-left: 4px; }
.mini li::before { content: "•"; display: inline-block; width: 4px; margin-left: -4px; color: #888; }
.mini .none::before { content: ""; }
.mini .l2 { padding-left: 12px; font-size: 2.95px; }
.mini .l3 { padding-left: 20px; font-size: 2.48px; height: 3.5px; }
.mini .small { font-size: 2.27px; }
.mini li:nth-child(1) { height: 6.3px; } .mini li:nth-child(2) { height: 9px; } .mini li:nth-child(4) { height: 4px; } .mini li:nth-child(5) { height: 5px; }
.mini li:nth-child(10) { height: 7px; } .mini li:nth-child(12) { height: 8px; }
a { color: inherit; }
.slide a, .mini a { color: #1168c0; text-decoration: underline; }
.slide a.seen, .mini a.seen { color: #954f72; }
.editor { flex: 1; display: flex; flex-direction: column; }
.canvas { display: flex; height: 701px; padding-left: 162px; }
.slide { position: relative; width: 1269px; height: 698px; background: #fff; border: 1px solid #c8c8c8; border-width: 0 1px; color: #000; font-family: "Carlito", "Lato", sans-serif; }
.slide h1 { margin: 0; padding: 63px 0 0 95.5px; font: 300 51px/64px "Lato", sans-serif; letter-spacing: 1.2px; -webkit-text-stroke: .6px #000; }
.content { margin: 56.2px 0 0 120.6px; padding: 0; list-style: none; font-size: 19.82px; line-height: 24px; white-space: nowrap; }
.content li { position: relative; height: 32px; }
.content li::before { content: "•"; position: absolute; left: -23px; font-size: .72em; }
.content .none::before { content: ""; }
.content .empty::before { color: #b0b0b0; }
.content .l2 { padding-left: 47.5px; font-size: 17.24px; }
.content .l3 { padding-left: 95px; font-size: 14.54px; }
.content .l2::before { left: 24px; } .content .l3::before { left: 71.5px; }
.content .none { padding-left: 71.5px; }
.content .tiny { font-size: 12.1px; } .content .small { font-size: 13.3px; }
.content .split { display: flex; justify-content: space-between; width: 762.5px; }
.content li:nth-child(3) { height: 24px; } .content li:nth-child(4) { height: 21.5px; } .content li:nth-child(5) { height: 19.5px; }
.content li:nth-child(6) { height: 29px; } .content li:nth-child(7) { height: 25px; } .content li:nth-child(8) { height: 22px; }
.content li:nth-child(9) { height: 21px; } .content li:nth-child(10) { height: 20px; } .content li:nth-child(11) { height: 45.5px; }
.content li:nth-child(12) { height: 22.5px; } .content li:nth-child(13) { height: 46px; } .content li:nth-child(14) { height: 20.5px; }
.content li:nth-child(15) { height: 19px; } .content li:nth-child(16) { height: 19.5px; }
.selection { position: absolute; left: 34px; top: 103px; }
.scroll { display: flex; flex-direction: column; width: 25px; margin-left: 160px; padding-top: 2px; }
.sb { display: flex; align-items: center; justify-content: center; width: 25px; height: 23px; background: #fff; border: 1px solid #b8b8b8; flex: none; }
.sb::before { content: ""; border: 6px solid transparent; }
.sb.up::before { border-bottom-color: #666; border-top: 0; } .sb.down::before { border-top-color: #666; border-bottom: 0; }
.gap1 { height: 56px; background: #dadada; }
.grip { height: 110px; background: #fff; border: 1px solid #b0b0b0; }
.track { height: 404px; background: #dadada; }
.notes { display: flex; justify-content: space-between; height: 48px; margin-left: 2px; padding-left: 14.5px; border-top: 1px solid #b8b8b8; font-size: 21.1px; line-height: 44px; color: #5c5a58; }
.nscroll { width: 26px; padding-top: 4px; } .nscroll .sb { height: 21px; margin-bottom: 1px; }

/* status bar */
.status { display: flex; align-items: center; height: 33px; background: #f3f2f1; border-top: 1px solid #c8c6c4; font-size: 14.8px; line-height: 24px; padding-left: 8px; white-space: nowrap; }
.st1, .lang, .nt { margin-top: -2px; }
.st1 { width: 98px; font-size: 15.2px; } .proof { margin-right: 16px; } .lang { width: 1214px; } .nt { width: 64px; margin-left: 2px; font-size: 14.6px; }
.normal { display: flex; align-items: center; justify-content: center; width: 48px; height: 32px; background: #c8c6c4; }
.pct { font: 15.7px "Open Sans", sans-serif; fill: #444; }

/* taskbar */
.taskbar { display: flex; height: 60px; background: linear-gradient(90deg, #442725 0 1735px, #444040 1790px, #454a4b 1840px, #2b3236 1890px, #232b30); color: #fff; }
.start { display: flex; align-items: center; justify-content: center; width: 72px; background: #202b31; }
.tsearch { display: flex; align-items: center; gap: 17px; width: 516px; padding: 2px 0 0 15px; background: #f2f2f2; border: 2px solid #bcbcbc; color: #222; font-size: 21.4px; }
.tsearch svg { margin-top: -4px; }
.apps { display: flex; padding-left: 4px; width: 806px; }
.cell { position: relative; display: flex; align-items: center; justify-content: center; width: 72.9px; }
.run::after { content: ""; position: absolute; left: 7px; bottom: 0; width: 59px; height: 3px; background: #76b0e4; }
.multi::after { background: linear-gradient(90deg, #76b0e4 44px, #4a6f90 44px, #5d8bb5 46px); }
.on { background: #6c5351; width: 70px; margin: 0 2px 0 1px; }
.on::after { left: 0; width: 70px; }
.eng { width: 54px; margin-left: 13px; font-size: 16.5px; line-height: 60px; }
.clock { display: flex; flex-direction: column; width: 94px; text-align: center; font-size: 17.3px; line-height: 28px; padding-top: 2.5px; white-space: nowrap; }
.bell { margin: 18px 30px 0 28px; }
.peek { width: 2px; background: #6f7578; }
.jb { font: 700 12.5px "Open Sans", sans-serif; fill: #fff; } .pp { font: 700 15px "Open Sans", sans-serif; fill: #fff; }

/* dialog */
.dialog { position: absolute; z-index: 3; left: 686px; top: 445px; width: 505px; height: 165px; background: #f0f0f0; border: 1px solid #a0a0a0; box-shadow: 2px 3px 10px rgba(0,0,0,.35); color: #000; font-size: 14.75px; line-height: 24px; }
.dtitle { display: flex; align-items: center; justify-content: space-between; height: 44px; padding: 0 16px 0 11px; background: #fff; color: #999; font-size: 16.8px; }
.dmsg { display: flex; align-items: center; gap: 23px; height: 73px; padding-left: 12px; }
.dmsg svg { margin-top: -3px; }
.dbtns { display: flex; gap: 16px; padding-left: 68.5px; }
.dbtns span { width: 111px; height: 34px; line-height: 32px; background: #e1e1e1; border: 1px solid #adadad; text-align: center; font-size: 14.9px; }
```
